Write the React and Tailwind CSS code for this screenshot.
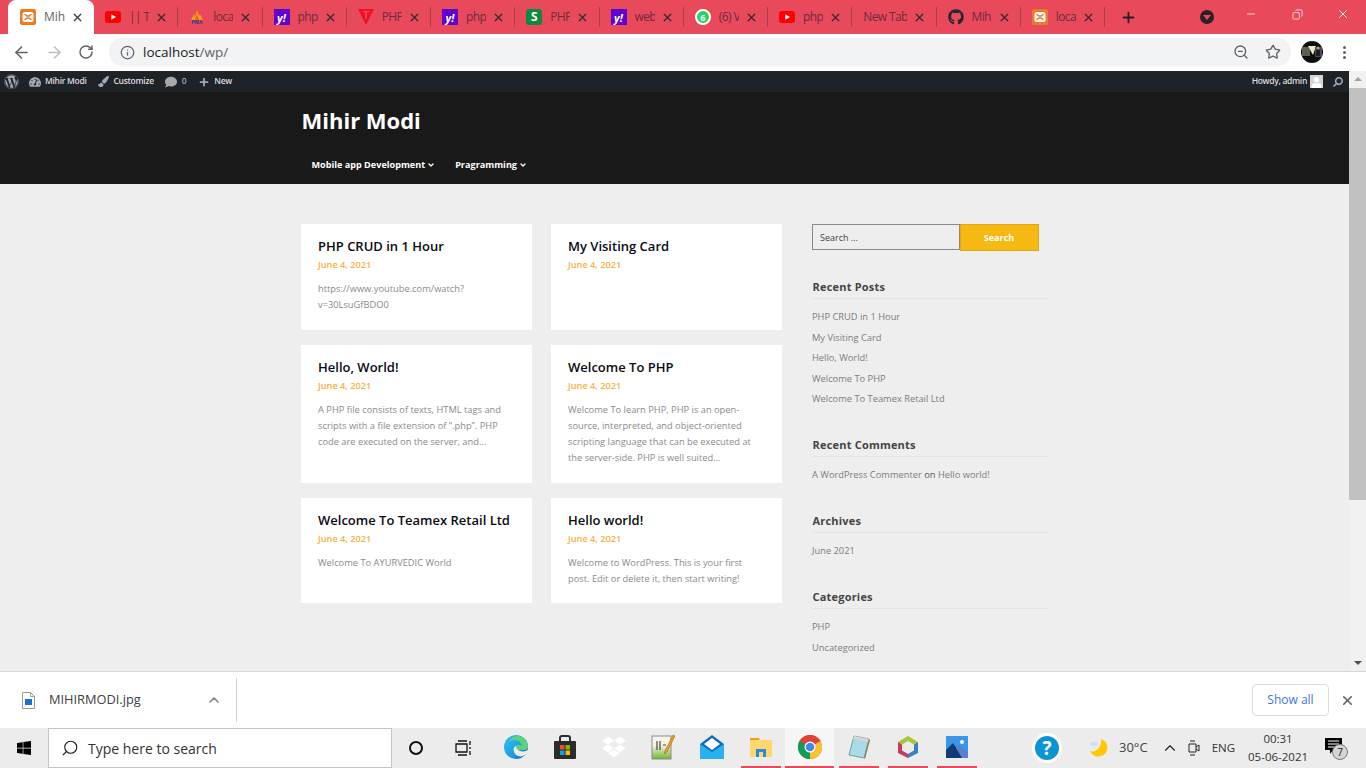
import { ArrowLeft, ArrowRight, RotateCw, Info, ZoomOut, Star, X, Plus, Minus, Copy, Search, ChevronUp, ChevronDown } from 'lucide-react';
import { FaWordpress, FaTachometerAlt, FaPaintBrush, FaComment, FaGithub, FaDropbox, FaWindows, FaUser, FaSearch } from 'react-icons/fa';

const FONT = "font-['Open_Sans',sans-serif]";

// favicons for the tab strip
function Xampp({ size = 16 }) {
  return (
    <svg width={size} height={size} viewBox="0 0 16 16">
      <rect width="16" height="16" rx="2" fill="#ee7a22" />
      <rect x="2.500" y="3" width="11" height="10" rx="2.500" fill="#fff" />
      <path d="M5 5.500l2 1.500h2l2-1.500M5 10.500l2-1.500h2l2 1.500" fill="none" stroke="#ee7a22" strokeWidth="1.500" strokeLinecap="round" />
    </svg>
  );
}

function Youtube() {
  return (
    <svg width="16" height="12" viewBox="0 0 16 12">
      <rect width="16" height="12" rx="3" fill="#f00" />
      <path d="M6.300 3.200v5.600L11 6z" fill="#fff" />
    </svg>
  );
}

function Pma() {
  return (
    <svg width="16" height="16" viewBox="0 0 16 16">
      <path d="M2 11L5 5l1 3 2-7 2 6 1-2 3 6z" fill="#f59a23" />
      <path d="M6 11l2-6 2 6z" fill="#e8611a" />
      <rect x="0.500" y="11" width="15" height="4" fill="#e94a5b" />
      <text x="8" y="15" textAnchor="middle" fontSize="5" fontWeight="700" fill="#23408e" fontFamily="Liberation Sans">PMA</text>
    </svg>
  );
}

function Yahoo() {
  return (
    <span className="flex h-4 w-4 items-center justify-center bg-[#6001d2] text-[11px] leading-none font-bold text-white italic">y!</span>
  );
}

function TriangleT() {
  return (
    <svg width="16" height="16" viewBox="0 0 16 16">
      <path d="M0 0h16L8 16z" fill="#f0102a" />
      <text x="8" y="10" textAnchor="middle" fontSize="10" fontWeight="700" fill="#e94a5b" fontFamily="Liberation Sans">T</text>
    </svg>
  );
}

function GreenS() {
  return (
    <span className="flex h-4 w-4 items-center justify-center rounded-[3px] bg-[#0f8a3c] text-[12px] leading-none font-bold text-white">S</span>
  );
}

function Whatsapp() {
  return (
    <span className="flex h-4 w-4 items-center justify-center rounded-full border-2 border-white bg-[#25d366] text-[9px] leading-none font-bold text-white">6</span>
  );
}

// titles are only what can be read in the narrow tabs
const TABS = [
  { icon: <Youtube />, title: '|| Te' },
  { icon: <Pma />, title: 'loca' },
  { icon: <Yahoo />, title: 'php' },
  { icon: <TriangleT />, title: 'PHP' },
  { icon: <Yahoo />, title: 'php' },
  { icon: <GreenS />, title: 'PHP' },
  { icon: <Yahoo />, title: 'web' },
  { icon: <Whatsapp />, title: '(6) V' },
  { icon: <Youtube />, title: 'php' },
  { icon: null, title: 'New Tab' },
  { icon: <FaGithub className="text-[16px] text-[#24292e]" />, title: 'Mih' },
  { icon: <Xampp />, title: 'loca' },
];

function TabStrip() {
  return (
    <div className="flex h-[34px] shrink-0 bg-[#e94a5b] pl-2">
      {/* active tab */}
      <div className="mt-0 flex h-[34px] w-[86px] items-center rounded-t-lg bg-white pl-3">
        <Xampp />
        <span className="ml-2 w-5 text-[12px] whitespace-nowrap text-[#5f6368]">Mih</span>
        <X size={13} strokeWidth={2.5} className="ml-[7px] text-[#3c4043]" />
      </div>
      {TABS.map((tab, i) => (
        <div key={i} className="flex h-[34px] w-[84.25px] items-center">
          <div className="flex h-5 w-full items-center border-r border-[#a5414e] pl-[11px]">
            {tab.icon && <span className="mr-2 flex w-4 justify-center">{tab.icon}</span>}
            <span className={`${tab.icon ? 'w-5' : 'w-[44px]'} overflow-hidden text-[12px] tracking-[-0.6px] whitespace-nowrap text-[#6e2c39]`}>{tab.title}</span>
            <X size={13} strokeWidth={2.5} className="ml-[6px] shrink-0 text-[#3c2a32]" />
          </div>
        </div>
      ))}
      <Plus size={17} strokeWidth={2.5} className="mt-[9px] ml-[15px] text-[#2a1d24]" />
      <span className="mt-[10px] ml-[63px] flex h-[14px] w-[14px] items-center justify-center rounded-full bg-[#2a2028]">
        <span className="h-0 w-0 border-x-[4px] border-t-[5px] border-x-transparent border-t-[#e94a5b]" />
      </span>
      {/* window buttons */}
      <div className="ml-auto flex text-white">
        <span className="flex h-7 w-[46px] items-center justify-center"><Minus size={12} strokeWidth={1.5} /></span>
        <span className="flex h-7 w-[46px] items-center justify-center"><Copy size={11} strokeWidth={1.5} className="-scale-x-100" /></span>
        <span className="flex h-7 w-[46px] items-center justify-center"><X size={14} strokeWidth={1.5} /></span>
      </div>
    </div>
  );
}

// profile picture, a small photo of someone in front of a dark wall
function Avatar() {
  return (
    <svg width="22" height="22" viewBox="0 0 22 22" className="ml-[10px]">
      <circle cx="11" cy="11" r="11" fill="#0d0d0d" />
      <rect x="1" y="6" width="8" height="9" fill="#5c6150" />
      <path d="M7 5h8l-3 9z" fill="#efe7c8" />
      <rect x="14" y="6" width="7" height="10" fill="#4a4a50" />
      <path d="M15 15v-5l2-3 2 3v5z" fill="#1c1c28" />
      <circle cx="17" cy="7" r="1.500" fill="#c99a80" />
    </svg>
  );
}

function Toolbar() {
  return (
    <div className="flex h-[37px] shrink-0 items-center bg-white pb-[1px]">
      <ArrowLeft size={19} className="ml-[12px] text-[#5f6368]" />
      <ArrowRight size={19} className="ml-[14px] text-[#bdc1c6]" />
      <RotateCw size={16} strokeWidth={2.2} className="ml-[14px] text-[#5f6368]" />
      <div className="ml-[15px] flex h-[28px] w-[1182px] items-center rounded-full bg-[#f1f3f4] pl-[11px]">
        <Info size={15} className="text-[#5f6368]" />
        <span className="ml-[8px] text-[13.5px] text-[#202124]">localhost<span className="text-[#5f6368]">/wp/</span></span>
        <ZoomOut size={16} className="mr-[16px] ml-auto text-[#5f6368]" />
        <Star size={16} className="mr-[10px] text-[#5f6368]" />
      </div>
      <Avatar />
      <span className="ml-[20px] flex flex-col gap-[2px]">
        <span className="h-[3px] w-[3px] rounded-full bg-[#5f6368]" />
        <span className="h-[3px] w-[3px] rounded-full bg-[#5f6368]" />
        <span className="h-[3px] w-[3px] rounded-full bg-[#5f6368]" />
      </span>
    </div>
  );
}

function AdminBar() {
  return (
    <div className="flex h-[21px] shrink-0 items-center bg-[#1d2327] text-[8.5px] font-semibold tracking-[-0.3px] text-[#dcdcdc]">
      <FaWordpress className="ml-1 text-[15px] text-[#a7aaad]" />
      <FaTachometerAlt className="ml-[10px] text-[12px] text-[#a7aaad]" />
      <span className="ml-[4px]">Mihir Modi</span>
      <FaPaintBrush className="ml-[11px] text-[11px] text-[#a7aaad]" />
      <span className="ml-[5px]">Customize</span>
      <FaComment className="ml-[11px] text-[12px] text-[#a7aaad]" />
      <span className="ml-[5px] text-[#a7aaad]">0</span>
      <Plus size={12} strokeWidth={3.5} className="ml-[12px] text-[#a7aaad]" />
      <span className="ml-[4px]">New</span>
      <span className="ml-auto">Howdy, admin</span>
      <span className="ml-[3px] flex h-[13px] w-[13px] items-end justify-center overflow-hidden bg-[#d5d5d5]">
        <FaUser className="text-[11px] text-white" />
      </span>
      <FaSearch className="mr-[6px] ml-[10px] -scale-x-100 text-[10px] text-[#a7aaad]" />
    </div>
  );
}

const POSTS = [
  { title: 'PHP CRUD in 1 Hour', text: 'https://www.youtube.com/watch?v=30LsuGfBDO0' },
  { title: 'My Visiting Card', text: '' },
  { title: 'Hello, World!', text: 'A PHP file consists of texts, HTML tags and scripts with a file extension of “.php”. PHP code are executed on the server, and…' },
  { title: 'Welcome To PHP', text: 'Welcome To learn PHP, PHP is an open-source, interpreted, and object-oriented scripting language that can be executed at the server-side. PHP is well suited…' },
  { title: 'Welcome To Teamex Retail Ltd', text: 'Welcome To AYURVEDIC World' },
  { title: 'Hello world!', text: 'Welcome to WordPress. This is your first post. Edit or delete it, then start writing!' },
];

function PostCard({ post }) {
  return (
    <article className="bg-white pt-[12px] pr-[17px] pl-[17.5px]">
      <h2 className="mb-[0.5px] text-[13px] leading-5 font-semibold whitespace-nowrap text-[#0a0a14]">{post.title}</h2>
      <p className="text-[9.2px] leading-4 font-semibold text-[#fbb040]">June 4, 2021</p>
      {post.text && <p className="mt-[8px] text-[9.3px] leading-4 break-words text-[#8a8a8a]">{post.text}</p>}
    </article>
  );
}

function Widget({ title, items }) {
  return (
    <section className="mb-[22.5px]">
      <h3 className="border-b border-[#e3e3e3] pt-px pl-px text-[11px] leading-[23px] font-bold tracking-[0.2px] text-[#444]">{title}</h3>
      <ul className="mt-[8px] pl-[0.5px] text-[9.3px] text-[#7c7c7c]">
        {items.map((item, i) => (
          <li key={i} className="h-[20.5px] leading-[20.5px] whitespace-nowrap">{item}</li>
        ))}
      </ul>
    </section>
  );
}

function Sidebar() {
  return (
    <aside className="ml-[30px] w-[237px] shrink-0">
      <div className="mb-[23px] flex h-[27px] w-[227px]">
        <div className="flex h-[26px] w-[148px] items-center border border-[#8a8a8a] bg-[#eeeeee] pt-px pl-[7.5px] text-[9px] text-[#444]">Search …</div>
        <div className="flex w-[79px] items-center justify-center border border-[#e0a912] bg-[#f6b911] text-[9px] font-bold text-white">Search</div>
      </div>
      <Widget title="Recent Posts" items={['PHP CRUD in 1 Hour', 'My Visiting Card', 'Hello, World!', 'Welcome To PHP', 'Welcome To Teamex Retail Ltd']} />
      <Widget title="Recent Comments" items={[<>A WordPress Commenter <span className="text-[#555]">on</span> Hello world!</>]} />
      <Widget title="Archives" items={['June 2021']} />
      <Widget title="Categories" items={['PHP', 'Uncategorized']} />
    </aside>
  );
}

function Page() {
  return (
    <div className="flex min-w-0 flex-1 flex-col overflow-hidden bg-[#eeeeee]">
      <AdminBar />
      <header className="h-[52px] shrink-0 bg-[#191919]">
        <div className="mx-auto w-[748px] pl-px text-[22px] leading-[56px] font-bold text-white">Mihir Modi</div>
      </header>
      <nav className="h-[40px] shrink-0 bg-[#1a1a1a]">
        <div className="mx-auto flex h-full w-[748px] items-center pt-px pl-[11px] text-[9.1px] font-bold text-white">
          <span>Mobile app Development</span>
          <ChevronDown size={8} strokeWidth={4} className="ml-[2px]" />
          <span className="ml-[20px]">Pragramming</span>
          <ChevronDown size={8} strokeWidth={4} className="ml-[2px]" />
        </div>
      </nav>
      <main className="mx-auto flex w-[748px] pt-[40px]">
        <div className="grid w-[481px] shrink-0 grid-cols-[231px_231px] grid-rows-[106px_138px_105px] gap-x-[19px] gap-y-[15px]">
          {POSTS.map((post) => <PostCard key={post.title} post={post} />)}
        </div>
        <Sidebar />
      </main>
    </div>
  );
}

function Scrollbar() {
  return (
    <div className="flex w-[17px] shrink-0 flex-col items-center bg-[#f1f1f1]">
      <span className="mt-[6px] h-0 w-0 border-x-[4px] border-b-[4px] border-x-transparent border-b-[#a3a3a3]" />
      <div className="mt-[7px] h-[412px] w-full bg-[#c1c1c1]" />
      <span className="mt-auto mb-[6px] h-0 w-0 border-x-[4px] border-t-[4px] border-x-transparent border-t-[#505050]" />
    </div>
  );
}

function DownloadBar() {
  return (
    <div className="flex h-[57px] shrink-0 items-center border-t border-[#d6d6d6] bg-white">
      <svg width="13" height="17" viewBox="0 0 13 17" className="ml-[22px]">
        <path d="M.5.500h8l4 4v12H.5zM8.500.500v4h4" fill="#fff" stroke="#9a9a9a" />
        <rect x="3" y="7" width="7" height="6" fill="#1b6fd0" />
      </svg>
      <span className="ml-[14px] text-[12.8px] text-[#3c4043]">MIHIRMODI.jpg</span>
      <ChevronUp size={16} strokeWidth={2.5} className="ml-[65px] text-[#80868b]" />
      <div className="ml-[14px] h-[44px] w-px bg-[#d0d0d0]" />
      <div className="ml-auto flex h-[32px] w-[77px] items-center justify-center rounded border border-[#dadce0] text-[12px] text-[#3b78e7]">Show all</div>
      <X size={15} strokeWidth={2.5} className="mr-[11px] ml-[11px] text-[#5f6368]" />
    </div>
  );
}

function Edge() {
  return (
    <svg width="24" height="24" viewBox="0 0 24 24">
      <defs>
        <linearGradient id="edge" x1="0" y1="0" x2="1" y2="1">
          <stop offset="0" stopColor="#35c1f1" />
          <stop offset="0.6" stopColor="#1b9de2" />
          <stop offset="1" stopColor="#0c59a4" />
        </linearGradient>
      </defs>
      <circle cx="12" cy="12" r="12" fill="url(#edge)" />
      <path d="M13 1c6 0 11 4 11 10 0 3-2 4-5 4H9c0-3 3-5 6-5 1 0 2 0 3 1-1-4-4-6-8-6-2 0-4 1-5 2 2-4 5-6 8-6z" fill="#5ed27a" />
      <path d="M24 15c-2 1-5 2-8 1-3-1-4-3-4-5-3 2-3 6 0 9 3 2 7 2 10-1 1-1 2-3 2-4z" fill="#ececec" />
    </svg>
  );
}

function Store() {
  return (
    <svg width="24" height="24" viewBox="0 0 24 24">
      <path d="M7 6V3q0-2 2-2h6q2 0 2 2v3" fill="none" stroke="#2b2b2b" strokeWidth="2" />
      <rect x="1" y="6" width="22" height="18" rx="1" fill="#2b2b2b" />
      <rect x="7" y="10" width="4.500" height="4.500" fill="#f25022" />
      <rect x="12.500" y="10" width="4.500" height="4.500" fill="#7fba00" />
      <rect x="7" y="15.500" width="4.500" height="4.500" fill="#00a4ef" />
      <rect x="12.500" y="15.500" width="4.500" height="4.500" fill="#ffb900" />
    </svg>
  );
}

function NotepadPP() {
  return (
    <svg width="24" height="26" viewBox="0 0 24 26">
      <defs>
        <linearGradient id="npp" x1="0" y1="0" x2="0" y2="1">
          <stop offset="0.4" stopColor="#f3f6e6" />
          <stop offset="1" stopColor="#6fb52c" />
        </linearGradient>
      </defs>
      <rect x="1" y="2" width="19" height="23" fill="url(#npp)" stroke="#8b8b8b" />
      <path d="M6 7v9M9 7v9M12 11h3" stroke="#444" strokeWidth="1.200" />
      <path d="M22 1l-8 16-1 3 3-2 8-16z" fill="#e8a21c" stroke="#b34a12" strokeWidth="0.500" />
    </svg>
  );
}

function Mail() {
  return (
    <svg width="24" height="24" viewBox="0 0 24 24">
      <path d="M0 9L12 0l12 9v15H0z" fill="#0f6cbd" />
      <path d="M4 9l8-6 8 6-8 6z" fill="#fff" />
      <path d="M0 9l12 8 12-8v15H0z" fill="#29b0ef" />
    </svg>
  );
}

function Explorer() {
  return (
    <svg width="22" height="20" viewBox="0 0 22 20">
      <path d="M0 1h9l1 3H0z" fill="#e8a317" />
      <rect y="3" width="22" height="17" rx="1" fill="#ffd76e" />
      <rect x="6" y="12" width="10" height="8" fill="#2b8dd8" />
      <rect x="9" y="15" width="4" height="5" fill="#ffd76e" />
    </svg>
  );
}

function Chrome() {
  return (
    <svg width="24" height="24" viewBox="0 0 24 24">
      <circle cx="12" cy="12" r="12" fill="#db4437" />
      <path d="M12 12L22.400 6A12 12 0 0 1 12 24z" fill="#fbc02d" />
      <path d="M12 12L12 24A12 12 0 0 1 1.600 6z" fill="#0f9d58" />
      <path d="M1.600 6A12 12 0 0 1 22.400 6H12z" fill="#db4437" />
      <circle cx="12" cy="12" r="5.500" fill="#fff" />
      <circle cx="12" cy="12" r="4.300" fill="#4285f4" />
    </svg>
  );
}

function Notepad() {
  return (
    <svg width="24" height="24" viewBox="0 0 24 24">
      <path d="M7 1l15 3-5 19-15-3z" fill="#a6dbe8" stroke="#7a9aa5" />
      <path d="M7 1l15 3-1 3-15-3z" fill="#d6d6d6" />
      <path d="M17 23l5-19 1 1-5 19z" fill="#8a7a5a" />
    </svg>
  );
}

function Cube() {
  return (
    <svg width="24" height="24" viewBox="0 0 24 24">
      <path d="M12 1l10 6-4 2.500L12 6 6 9.500 2 7z" fill="#a4c639" />
      <path d="M22 7v11l-10 5v-4l6-3.500V9.500z" fill="#3d7fc4" />
      <path d="M2 7v11l10 5v-4l-6-3.500V9.500z" fill="#c43d5a" />
    </svg>
  );
}

function Photos() {
  return (
    <svg width="22" height="22" viewBox="0 0 22 22">
      <rect width="22" height="22" fill="#3a96e8" />
      <circle cx="16" cy="6" r="2" fill="#fff" />
      <path d="M0 22V14l7-7 10 15z" fill="#123a73" />
      <path d="M10 12l4-3 8 8v5h-6z" fill="#5a7fd0" />
    </svg>
  );
}

const DOCK = [
  { icon: <Edge /> },
  { icon: <Store /> },
  { icon: <FaDropbox className="text-[24px] text-white" /> },
  { icon: <NotepadPP /> },
  { icon: <Mail /> },
  { icon: <Explorer />, open: true },
  { icon: <Chrome />, open: true, active: true },
  { icon: <Notepad />, open: true },
  { icon: <Cube />, open: true },
  { icon: <Photos />, open: true },
];

function Taskbar() {
  return (
    <div className="flex h-[40px] shrink-0 items-center bg-[#ececec] text-[#3b3b3b]">
      <FaWindows className="ml-4 text-[16px] text-black" />
      <div className="ml-4 flex h-[40px] w-[344px] items-center border border-[#c4c4c4] bg-white pl-[12px]">
        <Search size={18} strokeWidth={1.5} className="-scale-x-100 text-[#222]" />
        <span className="ml-[9px] text-[14px] text-[#333]">Type here to search</span>
      </div>
      <span className="ml-[17px] h-[14px] w-[14px] rounded-full border-[2.5px] border-[#111]" />
      {/* task view */}
      <svg width="18" height="16" viewBox="0 0 18 16" className="ml-[31px]">
        <path d="M2 4h11v8H2zM4 1h9M4 15h9M16 1v4M16 7v2M16 11v4" fill="none" stroke="#111" strokeWidth="1.300" />
      </svg>
      <div className="ml-[19px] flex">
        {DOCK.map((item, i) => (
          <div key={i} className={`flex h-[40px] w-[49px] flex-col items-center ${item.active ? 'bg-[#f6f6f6]' : ''}`}>
            <div className="flex h-[38px] items-center">{item.icon}</div>
            {item.open && <div className={`h-[2px] ${item.active ? 'w-full' : 'w-10'} bg-[#e94a5b]`} />}
          </div>
        ))}
      </div>
      {/* tray */}
      <span className="ml-[51px] flex h-[30px] w-[30px] items-center justify-center rounded-full border-[3px] border-white bg-[#0a94d6] text-[19px] leading-none font-bold text-white">?</span>
      <svg width="20" height="20" viewBox="0 0 20 20" className="ml-[27px]">
        <path d="M12 1a9 9 0 1 1-11 12c5 2 12-3 11-12z" fill="#ffc800" />
        <ellipse cx="5" cy="6" rx="4" ry="2.500" fill="#cfe3f5" />
      </svg>
      <span className="ml-[10px] text-[13px] text-[#444]">30°C</span>
      <ChevronUp size={18} strokeWidth={1.5} className="ml-[13px] text-[#222]" />
      <svg width="14" height="18" viewBox="0 0 14 18" className="ml-[8px]">
        <path d="M2 5h7v8H2zM9 8l3-2v6l-3-2M3 2h5M3 16h5" fill="none" stroke="#222" />
      </svg>
      <span className="ml-[11px] text-[11.5px] text-[#333]">ENG</span>
      <div className="ml-[14px] flex w-[58px] flex-col items-center text-[11.5px] leading-[18px] text-[#333]">
        <span>00:31</span>
        <span className="whitespace-nowrap">05-06-2021</span>
      </div>
      <div className="relative ml-[18px] h-[28px] w-[26px]">
        <svg width="17" height="16" viewBox="0 0 17 16" className="mt-[4px]">
          <path d="M0 0h17v12H8l-3 4v-4H0z" fill="#000" />
          <path d="M3 3h11M3 6h11M3 9h11" stroke="#fff" />
        </svg>
        {/* unread count badge */}
        <span className="absolute top-[10px] left-[7px] flex h-[16px] w-[16px] items-center justify-center rounded-full border border-[#777] bg-[#d5d5d5] text-[10px] text-[#222]">7</span>
      </div>
    </div>
  );
}

export default function App() {
  return (
    <div className={`flex h-[768px] w-[1366px] flex-col overflow-hidden bg-white ${FONT}`}>
      <TabStrip />
      <Toolbar />
      <div className="flex h-[600px] shrink-0">
        <Page />
        <Scrollbar />
      </div>
      <DownloadBar />
      <Taskbar />
    </div>
  );
}
